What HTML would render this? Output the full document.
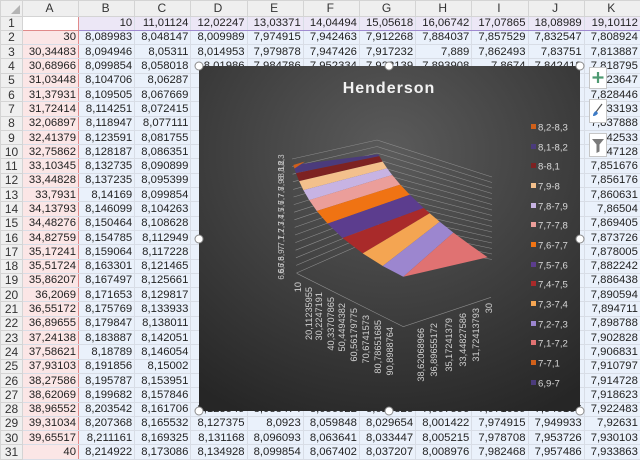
<!DOCTYPE html>
<html><head><meta charset="utf-8">
<style>
*{margin:0;padding:0;box-sizing:border-box}
body{width:640px;height:461px;overflow:hidden;background:#fff;font-family:"Liberation Sans",sans-serif;position:relative}
table{border-collapse:collapse;table-layout:fixed;position:absolute;left:0;top:0;width:640px}
td{height:14.3px;font-size:11.3px;color:#222;text-align:right;padding:0 2px 0 0;border:1px solid #d8dde6;white-space:nowrap;overflow:hidden;line-height:12px;background:#eaf1fb}
tr.h td{height:15.5px;background:#efefef;text-align:center;color:#333;border-color:#d4d4d4;font-size:12px}
td.r{background:#efefef;text-align:center;color:#333;border-color:#d4d4d4;font-size:12px;padding:0}
td.a{background:#fbe6e6;border-right:1px solid #e08a8a}
tr.one td.b{background:#ece7f6;border-bottom:1px solid #9f8bd0}
tr.one td.a{border-bottom:1px solid #e08a8a;background:#fff}
</style></head><body>
<table>
<colgroup><col style="width:22px"><col style="width:56px"><col span="10" style="width:56.2px"></colgroup>
<tr class="h"><td style="position:relative"><div style="position:absolute;right:2px;bottom:2px;width:0;height:0;border-left:9px solid transparent;border-bottom:9px solid #b4b4b4"></div></td><td>A</td><td>B</td><td>C</td><td>D</td><td>E</td><td>F</td><td>G</td><td>H</td><td>I</td><td>J</td><td>K</td></tr>
<tr class="one"><td class="r">1</td><td class="a"></td><td class="b">10</td><td class="b">11,01124</td><td class="b">12,02247</td><td class="b">13,03371</td><td class="b">14,04494</td><td class="b">15,05618</td><td class="b">16,06742</td><td class="b">17,07865</td><td class="b">18,08989</td><td class="b">19,10112</td></tr>
<tr><td class="r">2</td><td class="a">30</td><td>8,089983</td><td>8,048147</td><td>8,009989</td><td>7,974915</td><td>7,942463</td><td>7,912268</td><td>7,884037</td><td>7,857529</td><td>7,832547</td><td>7,808924</td></tr>
<tr><td class="r">3</td><td class="a">30,34483</td><td>8,094946</td><td>8,05311</td><td>8,014953</td><td>7,979878</td><td>7,947426</td><td>7,917232</td><td>7,889</td><td>7,862493</td><td>7,83751</td><td>7,813887</td></tr>
<tr><td class="r">4</td><td class="a">30,68966</td><td>8,099854</td><td>8,058018</td><td>8,01986</td><td>7,984786</td><td>7,952334</td><td>7,922139</td><td>7,893908</td><td>7,8674</td><td>7,842418</td><td>7,818795</td></tr>
<tr><td class="r">5</td><td class="a">31,03448</td><td>8,104706</td><td>8,06287</td><td></td><td></td><td></td><td></td><td></td><td></td><td></td><td>7,823647</td></tr>
<tr><td class="r">6</td><td class="a">31,37931</td><td>8,109505</td><td>8,067669</td><td></td><td></td><td></td><td></td><td></td><td></td><td></td><td>7,828446</td></tr>
<tr><td class="r">7</td><td class="a">31,72414</td><td>8,114251</td><td>8,072415</td><td></td><td></td><td></td><td></td><td></td><td></td><td></td><td>7,833193</td></tr>
<tr><td class="r">8</td><td class="a">32,06897</td><td>8,118947</td><td>8,077111</td><td></td><td></td><td></td><td></td><td></td><td></td><td></td><td>7,837888</td></tr>
<tr><td class="r">9</td><td class="a">32,41379</td><td>8,123591</td><td>8,081755</td><td></td><td></td><td></td><td></td><td></td><td></td><td></td><td>7,842533</td></tr>
<tr><td class="r">10</td><td class="a">32,75862</td><td>8,128187</td><td>8,086351</td><td></td><td></td><td></td><td></td><td></td><td></td><td></td><td>7,847128</td></tr>
<tr><td class="r">11</td><td class="a">33,10345</td><td>8,132735</td><td>8,090899</td><td></td><td></td><td></td><td></td><td></td><td></td><td></td><td>7,851676</td></tr>
<tr><td class="r">12</td><td class="a">33,44828</td><td>8,137235</td><td>8,095399</td><td></td><td></td><td></td><td></td><td></td><td></td><td></td><td>7,856176</td></tr>
<tr><td class="r">13</td><td class="a">33,7931</td><td>8,14169</td><td>8,099854</td><td></td><td></td><td></td><td></td><td></td><td></td><td></td><td>7,860631</td></tr>
<tr><td class="r">14</td><td class="a">34,13793</td><td>8,146099</td><td>8,104263</td><td></td><td></td><td></td><td></td><td></td><td></td><td></td><td>7,86504</td></tr>
<tr><td class="r">15</td><td class="a">34,48276</td><td>8,150464</td><td>8,108628</td><td></td><td></td><td></td><td></td><td></td><td></td><td></td><td>7,869405</td></tr>
<tr><td class="r">16</td><td class="a">34,82759</td><td>8,154785</td><td>8,112949</td><td></td><td></td><td></td><td></td><td></td><td></td><td></td><td>7,873726</td></tr>
<tr><td class="r">17</td><td class="a">35,17241</td><td>8,159064</td><td>8,117228</td><td></td><td></td><td></td><td></td><td></td><td></td><td></td><td>7,878005</td></tr>
<tr><td class="r">18</td><td class="a">35,51724</td><td>8,163301</td><td>8,121465</td><td></td><td></td><td></td><td></td><td></td><td></td><td></td><td>7,882242</td></tr>
<tr><td class="r">19</td><td class="a">35,86207</td><td>8,167497</td><td>8,125661</td><td></td><td></td><td></td><td></td><td></td><td></td><td></td><td>7,886438</td></tr>
<tr><td class="r">20</td><td class="a">36,2069</td><td>8,171653</td><td>8,129817</td><td></td><td></td><td></td><td></td><td></td><td></td><td></td><td>7,890594</td></tr>
<tr><td class="r">21</td><td class="a">36,55172</td><td>8,175769</td><td>8,133933</td><td></td><td></td><td></td><td></td><td></td><td></td><td></td><td>7,894711</td></tr>
<tr><td class="r">22</td><td class="a">36,89655</td><td>8,179847</td><td>8,138011</td><td></td><td></td><td></td><td></td><td></td><td></td><td></td><td>7,898788</td></tr>
<tr><td class="r">23</td><td class="a">37,24138</td><td>8,183887</td><td>8,142051</td><td></td><td></td><td></td><td></td><td></td><td></td><td></td><td>7,902828</td></tr>
<tr><td class="r">24</td><td class="a">37,58621</td><td>8,18789</td><td>8,146054</td><td></td><td></td><td></td><td></td><td></td><td></td><td></td><td>7,906831</td></tr>
<tr><td class="r">25</td><td class="a">37,93103</td><td>8,191856</td><td>8,15002</td><td></td><td></td><td></td><td></td><td></td><td></td><td></td><td>7,910797</td></tr>
<tr><td class="r">26</td><td class="a">38,27586</td><td>8,195787</td><td>8,153951</td><td></td><td></td><td></td><td></td><td></td><td></td><td></td><td>7,914728</td></tr>
<tr><td class="r">27</td><td class="a">38,62069</td><td>8,199682</td><td>8,157846</td><td></td><td></td><td></td><td></td><td></td><td></td><td></td><td>7,918623</td></tr>
<tr><td class="r">28</td><td class="a">38,96552</td><td>8,203542</td><td>8,161706</td><td>8,123549</td><td>8,088474</td><td>8,056022</td><td>8,025828</td><td>7,997596</td><td>7,971089</td><td>7,946106</td><td>7,922483</td></tr>
<tr><td class="r">29</td><td class="a">39,31034</td><td>8,207368</td><td>8,165532</td><td>8,127375</td><td>8,0923</td><td>8,059848</td><td>8,029654</td><td>8,001422</td><td>7,974915</td><td>7,949933</td><td>7,92631</td></tr>
<tr><td class="r">30</td><td class="a">39,65517</td><td>8,211161</td><td>8,169325</td><td>8,131168</td><td>8,096093</td><td>8,063641</td><td>8,033447</td><td>8,005215</td><td>7,978708</td><td>7,953726</td><td>7,930103</td></tr>
<tr><td class="r">31</td><td class="a">40</td><td>8,214922</td><td>8,173086</td><td>8,134928</td><td>8,099854</td><td>8,067402</td><td>8,037207</td><td>8,008976</td><td>7,982468</td><td>7,957486</td><td>7,933863</td></tr>
</table>

<svg width="640" height="461" viewBox="0 0 640 461" style="position:absolute;left:0;top:0" font-family="Liberation Sans, sans-serif">
<defs>
<radialGradient id="bg" cx="0.5" cy="0.25" r="0.85">
<stop offset="0" stop-color="#5b5b5b"/><stop offset="1" stop-color="#262626"/>
</radialGradient>
</defs>
<rect x="199" y="66" width="381" height="345" fill="url(#bg)"/>
<text x="389" y="93" fill="#f2f2f2" font-size="16" font-weight="bold" text-anchor="middle" letter-spacing="1">Henderson</text>
<g stroke="#8c8c8c" stroke-width="0.6" fill="none">
<polyline points="292,159 377,140 492,177"/>
<polyline points="292.3,166.6 377,146.5 492,182.5"/>
<polyline points="292.6,174.2 377,153 492,188"/>
<polyline points="292.9,181.8 377,159.5 492,193.5"/>
<polyline points="293.2,189.4 377,166 492,199"/>
<polyline points="293.5,197 377,172.5 492,204.5"/>
<polyline points="293.8,204.6 377,179 492,210"/>
<polyline points="294.1,212.2 377,185.5 492,215.5"/>
<polyline points="294.4,219.8 377,192 492,221"/>
<polyline points="294.7,227.4 377,198.5 492,226.5"/>
<polyline points="295,235 377,205 492,232"/>
<polyline points="295.3,242.6 377,211.5 492,237.5"/>
<polyline points="295.6,250.2 377,218 492,243"/>
<polyline points="295.9,257.8 377,224.5 492,248.5"/>
<polyline points="296.2,265.4 377,231 492,254"/>
<polyline points="296.5,273 377,237.5 492,259.5"/>
<polyline points="296.7,273.3 403.3,326.7 491,297.3"/>
</g>
<g stroke="none">
<polygon fill="#4b3b7c" points="293.3,165 296,173.1 379.3,156.1 378.3,154.3"/>
<polygon fill="#d0601a" points="293.3,165 294.5,168.5 305,161.5 300,163"/>
<polygon fill="#7d2222" points="296,173.1 299.1,181.1 382.7,161.6 379.3,156.1"/>
<polygon fill="#f3c08c" points="299.1,181.1 303.4,190.1 387.1,168.3 382.7,161.6"/>
<polygon fill="#c7b3e3" points="303.4,190.1 309.2,200.1 392.2,175 387.1,168.3"/>
<polygon fill="#eb9e9a" points="309.2,200.1 316.8,211 400.3,184.6 392.2,175"/>
<polygon fill="#f07313" points="316.8,211 327.6,223.6 409.8,194.7 400.3,184.6"/>
<polygon fill="#5c3d8e" points="327.6,223.6 342.5,238 423.7,208 409.8,194.7"/>
<polygon fill="#a92a2a" points="342.5,238 362.7,253.4 429.7,213.3 423.7,208"/>
<polygon fill="#f4a552" points="362.7,253.4 382.7,266 439.7,221.8 429.7,213.3"/>
<polygon fill="#9c86cf" points="382.7,266 403.3,276.7 453.4,232.6 439.7,221.8"/>
<polygon fill="#e07272" points="403.3,276.7 487.7,257.3 471.4,245.9 453.4,232.6"/>
</g>
<g fill="#c8c8c8" font-size="8">
<text transform="translate(284,160) rotate(-90)" text-anchor="middle">8,3</text>
<text transform="translate(284,166) rotate(-90)" text-anchor="middle">8,2</text>
<text transform="translate(284,172) rotate(-90)" text-anchor="middle">8,1</text>
<text transform="translate(284,178) rotate(-90)" text-anchor="middle">8</text>
<text transform="translate(284,185) rotate(-90)" text-anchor="middle">7,9</text>
<text transform="translate(284,192) rotate(-90)" text-anchor="middle">7,8</text>
<text transform="translate(284,199) rotate(-90)" text-anchor="middle">7,7</text>
<text transform="translate(284,206) rotate(-90)" text-anchor="middle">7,6</text>
<text transform="translate(284,213) rotate(-90)" text-anchor="middle">7,5</text>
<text transform="translate(284,220) rotate(-90)" text-anchor="middle">7,4</text>
<text transform="translate(284,227) rotate(-90)" text-anchor="middle">7,3</text>
<text transform="translate(284,234) rotate(-90)" text-anchor="middle">7,2</text>
<text transform="translate(284,241) rotate(-90)" text-anchor="middle">7,1</text>
<text transform="translate(284,248) rotate(-90)" text-anchor="middle">7</text>
<text transform="translate(284,255) rotate(-90)" text-anchor="middle">6,9</text>
<text transform="translate(284,262) rotate(-90)" text-anchor="middle">6,8</text>
<text transform="translate(284,268) rotate(-90)" text-anchor="middle">6,7</text>
<text transform="translate(284,274) rotate(-90)" text-anchor="middle">6,6</text>
</g>
<g fill="#d0d0d0" font-size="9.2" text-anchor="end">
<text transform="translate(301,282) rotate(-90)">10</text>
<text transform="translate(312,287) rotate(-90)">20,11235955</text>
<text transform="translate(322,292) rotate(-90)">30,2247191</text>
<text transform="translate(334,297) rotate(-90)">40,33707865</text>
<text transform="translate(345,303) rotate(-90)">50,4494382</text>
<text transform="translate(357,308) rotate(-90)">60,56179775</text>
<text transform="translate(369,315) rotate(-90)">70,6741573</text>
<text transform="translate(381,320) rotate(-90)">80,78651685</text>
<text transform="translate(393,327) rotate(-90)">90,8988764</text>
<text transform="translate(492,303) rotate(-90)">30</text>
<text transform="translate(479,308) rotate(-90)">31,72413793</text>
<text transform="translate(466,313) rotate(-90)">33,44827586</text>
<text transform="translate(452,318) rotate(-90)">35,17241379</text>
<text transform="translate(437,323) rotate(-90)">36,89655172</text>
<text transform="translate(424,328) rotate(-90)">38,62068966</text>
</g>
<g font-size="9.6" fill="#d8d8d8">
<rect x="531" y="124" width="5" height="5" fill="#d0601a"/><text x="538" y="130.5">8,2-8,3</text>
<rect x="531" y="144" width="5" height="5" fill="#4b3b7c"/><text x="538" y="150.5">8,1-8,2</text>
<rect x="531" y="163" width="5" height="5" fill="#7d2222"/><text x="538" y="169.5">8-8,1</text>
<rect x="531" y="183" width="5" height="5" fill="#f3c08c"/><text x="538" y="189.5">7,9-8</text>
<rect x="531" y="203" width="5" height="5" fill="#c7b3e3"/><text x="538" y="209.5">7,8-7,9</text>
<rect x="531" y="222" width="5" height="5" fill="#eb9e9a"/><text x="538" y="228.5">7,7-7,8</text>
<rect x="531" y="242" width="5" height="5" fill="#f07313"/><text x="538" y="248.5">7,6-7,7</text>
<rect x="531" y="262" width="5" height="5" fill="#5c3d8e"/><text x="538" y="268.5">7,5-7,6</text>
<rect x="531" y="281" width="5" height="5" fill="#a92a2a"/><text x="538" y="287.5">7,4-7,5</text>
<rect x="531" y="301" width="5" height="5" fill="#f4a552"/><text x="538" y="307.5">7,3-7,4</text>
<rect x="531" y="321" width="5" height="5" fill="#9c86cf"/><text x="538" y="327.5">7,2-7,3</text>
<rect x="531" y="340" width="5" height="5" fill="#e07272"/><text x="538" y="346.5">7,1-7,2</text>
<rect x="531" y="360" width="5" height="5" fill="#d0601a"/><text x="538" y="366.5">7-7,1</text>
<rect x="531" y="380" width="5" height="5" fill="#4b3b7c"/><text x="538" y="386.5">6,9-7</text>
</g>
<g fill="#fff" stroke="#8a8a8a" stroke-width="1">
<circle cx="199" cy="66" r="4"/><circle cx="389" cy="66" r="4"/><circle cx="580" cy="66" r="4"/>
<circle cx="199" cy="239" r="4"/><circle cx="580" cy="239" r="4"/>
<circle cx="199" cy="411" r="4"/><circle cx="389" cy="411" r="4"/><circle cx="580" cy="411" r="4"/>
</g>
<g fill="#fff" stroke="#c6c6c6">
<rect x="589.5" y="67.5" width="17" height="21"/>
<rect x="589.5" y="99.5" width="17" height="23"/>
<rect x="589.5" y="133.5" width="17" height="23"/>
</g>
<path d="M598 72v11M592.5 77.5h11" stroke="#4e9a72" stroke-width="2.2"/>
<path d="M602 104l-6 8" stroke="#555" stroke-width="1.2"/>
<path d="M596 111c-2 1-3 3-3 5 2 0 4-1 5-3z" fill="#3d7bc6"/>
<path d="M592 139h12l-4.5 5.5v7l-3 1.5v-8.5z" fill="#7a7a7a"/>
</svg>
</body></html>
